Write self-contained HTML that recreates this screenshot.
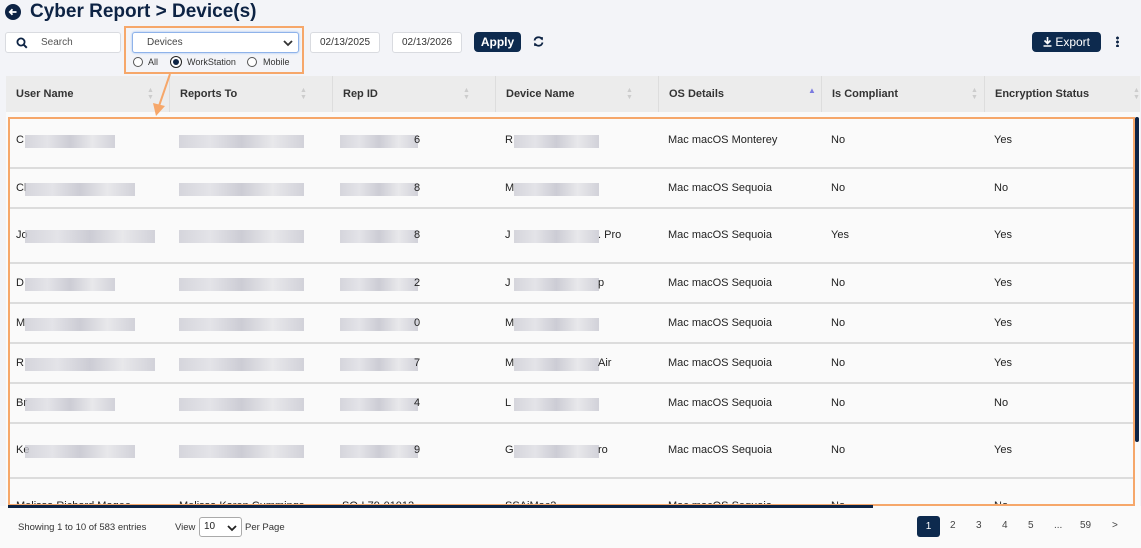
<!DOCTYPE html>
<html><head><meta charset="utf-8"><style>
*{box-sizing:border-box;margin:0;padding:0}
body{width:1141px;height:548px;background:#f3f4f8;font-family:"Liberation Sans",Arial,sans-serif;position:relative;overflow:hidden;color:#222}
.a{position:absolute}
.title{left:30px;top:1px;font-size:19px;font-weight:bold;color:#0d2344}
.inp{background:#fff;border:1px solid #d9dbe0;border-radius:3px;height:21px;font-size:10px;color:#555;line-height:19px}
.btn{background:#0d2a4e;color:#fff;border-radius:4px;font-size:12px;text-align:center}
.tbl{left:6px;top:76px;width:1134px;height:432px;background:#fafafa}
.hd{top:76px;height:36px;background:#ececec;font-size:11px;font-weight:bold;color:#333;line-height:36px;padding-left:10px;border-right:1px solid #ddd}
.cell{font-size:11px;color:#222}
.ln{left:8px;width:1126px;height:2px;background:#dcdcdc}
.bl{height:13px;background:linear-gradient(90deg,#c9c9d2,#dcdce2,#bdbdc8,#e2e2e6,#c4c4ce);opacity:.75}
.pg{font-size:10px;color:#444;top:520px}
.ar{font-size:7px;color:#ccc;line-height:7px}
</style></head><body>
<div class="a" style="left:5px;top:4px;width:16px;height:16px;border-radius:50%;background:#0d2344"><svg width="16" height="16"><path d="M11.5 8H5M7.5 5.2L4.8 8l2.7 2.8" stroke="#fff" stroke-width="1.8" fill="none"/></svg></div>
<div class="a title">Cyber Report &gt; Device(s)</div>
<div class="a inp" style="left:5px;top:32px;width:116px;height:21px"><svg class="a" style="left:10px;top:4px" width="12" height="12"><circle cx="5" cy="5" r="3.6" stroke="#0d2344" stroke-width="1.8" fill="none"/><path d="M7.6 7.6L10.8 10.8" stroke="#0d2344" stroke-width="2"/></svg><span style="position:absolute;left:35px">Search</span></div>
<div class="a" style="left:124px;top:26px;width:180px;height:48px;border:2px solid #f6a76a"></div>
<div class="a inp" style="left:132px;top:32px;width:167px;height:21px;border:1px solid #8fb3ea;box-shadow:0 0 2px #9ac0f0;padding-left:14px;color:#444">Devices<svg class="a" style="right:5px;top:6px" width="10" height="8"><path d="M1 2l4 4 4-4" stroke="#333" stroke-width="1.8" fill="none"/></svg></div>
<div class="a" style="left:133px;top:57px;width:10px;height:10px;border:1px solid #555;border-radius:50%;background:#fff"></div>
<div class="a" style="left:148px;top:57px;font-size:9px;color:#333">All</div>
<div class="a" style="left:170px;top:56px;width:12px;height:12px;border:1px solid #222;border-radius:50%;background:#fff"><div style="margin:2px;width:6px;height:6px;border-radius:50%;background:#0d2344"></div></div>
<div class="a" style="left:187px;top:57px;font-size:9px;color:#333">WorkStation</div>
<div class="a" style="left:247px;top:57px;width:10px;height:10px;border:1px solid #555;border-radius:50%;background:#fff"></div>
<div class="a" style="left:263px;top:57px;font-size:9px;color:#333">Mobile</div>
<div class="a inp" style="left:310px;top:32px;width:70px;text-align:center;color:#333">02/13/2025</div>
<div class="a inp" style="left:392px;top:32px;width:70px;text-align:center;color:#333">02/13/2026</div>
<div class="a btn" style="left:474px;top:32px;width:47px;height:20px;line-height:20px;font-weight:bold">Apply</div>
<svg class="a" style="left:533px;top:36px" width="11" height="11"><path d="M1.5 4.5A4 4 0 0 1 9 3.5M9.5 6.5A4 4 0 0 1 2 7.5" stroke="#0d2344" stroke-width="1.8" fill="none"/><path d="M7 1l3 .3-.3 3.2zM4 10l-3-.3.3-3.2z" fill="#0d2344"/></svg>
<div class="a btn" style="left:1032px;top:32px;width:69px;height:20px;line-height:20px"><svg width="9" height="10" style="vertical-align:-1px"><path d="M4.5 0v6M1.5 3.5l3 3 3-3M0.5 9h8" stroke="#fff" stroke-width="1.6" fill="none"/></svg> Export</div>
<div class="a" style="left:1116px;top:36px;width:3px;height:11px;background:radial-gradient(circle,#0d2344 1.4px,transparent 1.5px) 0 0/3px 4px"></div>

<div class="a tbl"></div>
<div class="a hd" style="left:6px;width:164px">User Name</div>
<div class="a hd" style="left:170px;width:163px">Reports To</div>
<div class="a hd" style="left:333px;width:163px">Rep ID</div>
<div class="a hd" style="left:496px;width:163px">Device Name</div>
<div class="a hd" style="left:659px;width:163px">OS Details</div>
<div class="a hd" style="left:822px;width:163px">Is Compliant</div>
<div class="a hd" style="left:985px;width:155px;border:none">Encryption Status</div>
<div class="a ar" style="left:147px;top:87px">&#9650;<br>&#9660;</div>
<div class="a ar" style="left:300px;top:87px">&#9650;<br>&#9660;</div>
<div class="a ar" style="left:463px;top:87px">&#9650;<br>&#9660;</div>
<div class="a ar" style="left:626px;top:87px">&#9650;<br>&#9660;</div>
<div class="a" style="left:808px;top:86px;font-size:8px;color:#7b7be0">&#9650;</div>
<div class="a ar" style="left:971px;top:87px">&#9650;<br>&#9660;</div>
<div class="a ar" style="left:1133px;top:87px">&#9650;<br>&#9660;</div>

<div class="a ln" style="top:167px"></div><div class="a ln" style="top:207px"></div><div class="a ln" style="top:262px"></div><div class="a ln" style="top:302px"></div><div class="a ln" style="top:342px"></div><div class="a ln" style="top:382px"></div><div class="a ln" style="top:422px"></div><div class="a ln" style="top:477px"></div>

<div id="rows"></div>
<script>
var ys=[141,189,236,284,324,364,404,451],
c1=["C","Cl","Jo","D","M","R","Br","Ke"],c3=["6","8","8","2","0","7","4","9"],
c4=["R","M","J","J","M","M","L","G"],c4e=["","",". Pro","p","","Air","","ro"],
os=["Mac macOS Monterey","Mac macOS Sequoia","Mac macOS Sequoia","Mac macOS Sequoia","Mac macOS Sequoia","Mac macOS Sequoia","Mac macOS Sequoia","Mac macOS Sequoia"],
ic=["No","No","Yes","No","No","No","No","No"],en=["Yes","No","Yes","Yes","Yes","Yes","No","Yes"],h="";
function t(x,y,s){return '<div class="a cell" style="left:'+x+'px;top:'+(y-7)+'px">'+s+'</div>';}
function b(x,y,w){return '<div class="a bl" style="left:'+x+'px;top:'+(y-6)+'px;width:'+w+'px"></div>';}
for(var i=0;i<8;i++){var y=ys[i];
h+=t(16,y,c1[i])+b(25,y,90+(i%3)*20)+b(179,y,125)+b(340,y,78)+t(414,y,c3[i])+t(505,y,c4[i])+b(514,y,85)+(c4e[i]?t(598,y,c4e[i]):"")+t(668,y,os[i])+t(831,y,ic[i])+t(994,y,en[i]);}
h+=t(16,507,"Melissa Richard Magee")+t(179,507,"Melissa Karen Cummings")+t(342,507,"SQ-L79-01012")+t(505,507,"SSAiMac2")+t(668,507,"Mac macOS Sequoia")+t(831,507,"No")+t(994,507,"No");
document.getElementById("rows").innerHTML=h;
</script>
<div class="a" style="left:0;top:506px;width:1141px;height:42px;background:#fafafa"></div>
<svg class="a" style="left:150px;top:72px" width="30" height="45"><line x1="20" y1="2" x2="9" y2="34" stroke="#f6a76a" stroke-width="2"/><polygon points="3,31 15,34 6,44" fill="#f6a76a"/></svg>
<div class="a" style="left:8px;top:117px;width:1127px;height:389px;border:2px solid #f6a76a"></div>
<div class="a" style="left:8px;top:505px;width:865px;height:3px;background:#0d2344"></div>
<div class="a" style="left:1135px;top:117px;width:4px;height:325px;background:#0d2344;border-radius:2px"></div>
<div class="a" style="left:18px;top:522px;font-size:9.5px;color:#333">Showing 1 to 10 of 583 entries</div>
<div class="a" style="left:175px;top:522px;font-size:9.5px;color:#333">View</div>
<div class="a" style="left:199px;top:517px;width:43px;height:20px;border:1px solid #aaa;border-radius:3px;background:#fff;font-size:10px;padding:3px 4px">10<svg class="a" style="right:4px;top:6px" width="10" height="8"><path d="M1 2l4 4 4-4" stroke="#222" stroke-width="1.8" fill="none"/></svg></div>
<div class="a" style="left:245px;top:522px;font-size:9.5px;color:#333">Per Page</div>
<div class="a" style="left:917px;top:516px;width:23px;height:21px;background:#0d2a4e;border-radius:3px;color:#fff;font-size:10px;text-align:center;line-height:21px">1</div>
<div class="a pg" style="left:950px">2</div><div class="a pg" style="left:976px">3</div><div class="a pg" style="left:1002px">4</div><div class="a pg" style="left:1028px">5</div><div class="a pg" style="left:1054px">...</div><div class="a pg" style="left:1080px">59</div><div class="a pg" style="left:1112px">&gt;</div>
</body></html>
